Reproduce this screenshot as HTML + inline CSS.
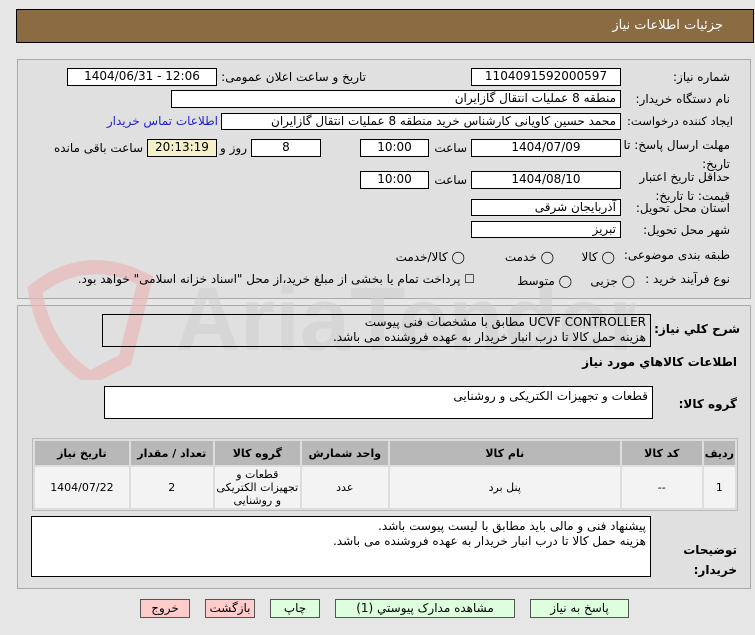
<!DOCTYPE html>
<html><head><meta charset="utf-8"><style>
*{box-sizing:border-box}
body{margin:0;width:755px;height:635px;background:#e6e6e6;font-family:"DejaVu Sans","Liberation Sans",sans-serif;font-size:12px;color:#000;position:relative;overflow:hidden}
.a{position:absolute}
.box{position:absolute;background:#fff;border:1px solid #000;direction:rtl;padding:0 4px;line-height:15px;white-space:nowrap;overflow:hidden}
.c{text-align:center;direction:ltr}
.l{position:absolute;direction:rtl;white-space:nowrap;text-align:right}
.btn{position:absolute;top:599px;height:19px;border:1px solid #555;text-align:center;line-height:17px;font-size:12px}
table{border-collapse:separate;border-spacing:2px;position:absolute;left:32px;top:438px;width:706px;background:#ddd;border:1px solid #bbb;direction:rtl}
th{background:#b8b8b8;height:24px;font-size:11px;font-weight:bold}
td{background:#f3f3f3;text-align:center;font-size:11px;height:41px}
</style></head><body>
<div class="a" style="left:16px;top:9px;width:738px;height:34px;background:#8b6b42;border:1px solid #000"></div>
<div class="l" style="right:32px;top:18px;color:#fff;font-size:13px">جزئیات اطلاعات نیاز</div>
<div class="a" style="left:17px;top:59px;width:734px;height:240px;background:#e0e0e0;border:1px solid #aaa"></div>
<div class="a" style="left:17px;top:305px;width:734px;height:284px;background:#e0e0e0;border:1px solid #aaa"></div>
<svg class="a" style="left:15px;top:250px" width="620" height="130">
<path d="M20 40 Q70 0 130 30 L110 110 Q90 120 75 128 Q30 100 20 40Z" fill="none" stroke="#e8b8b8" stroke-width="14" opacity=".7"/>
<text x="160" y="100" font-family="Liberation Sans" font-size="90" font-weight="bold" fill="#cfcfcf" opacity=".55">AriaTender.net</text>
</svg>
<div class="l" style="right:25px;top:70px">شماره نیاز:</div>
<div class="box c" style="left:471px;top:68px;width:150px;height:18px">1104091592000597</div>
<div class="l" style="right:389px;top:70px">تاریخ و ساعت اعلان عمومی:</div>
<div class="box c" style="left:67px;top:68px;width:150px;height:18px">1404/06/31 - 12:06</div>
<div class="l" style="right:25px;top:92px">نام دستگاه خریدار:</div>
<div class="box" style="left:171px;top:90px;width:450px;height:18px">منطقه 8 عملیات انتقال گازایران</div>
<div class="l" style="right:22px;top:114px;font-size:11.5px">ایجاد کننده درخواست:</div>
<div class="box" style="left:221px;top:113px;width:400px;height:17px">محمد حسین کاویانی کارشناس خرید منطقه 8 عملیات انتقال گازایران</div>
<div class="l" style="right:537px;top:114px;color:#2222cc">اطلاعات تماس خریدار</div>
<div class="l" style="right:25px;top:136px;line-height:19px">مهلت ارسال پاسخ: تا<br>تاریخ:</div>
<div class="box c" style="left:471px;top:139px;width:150px;height:18px">1404/07/09</div>
<div class="l" style="right:288px;top:141px">ساعت</div>
<div class="box c" style="left:360px;top:139px;width:69px;height:18px">10:00</div>
<div class="box c" style="left:251px;top:139px;width:70px;height:18px">8</div>
<div class="l" style="right:508px;top:141px">روز و</div>
<div class="box c" style="left:147px;top:139px;width:70px;height:18px;background:#f4f0c8">20:13:19</div>
<div class="l" style="right:612px;top:141px">ساعت باقی مانده</div>
<div class="l" style="right:25px;top:168px;line-height:19px">حداقل تاریخ اعتبار<br>قیمت: تا تاریخ:</div>
<div class="box c" style="left:471px;top:171px;width:150px;height:18px">1404/08/10</div>
<div class="l" style="right:288px;top:173px">ساعت</div>
<div class="box c" style="left:360px;top:171px;width:69px;height:18px">10:00</div>
<div class="l" style="right:25px;top:201px">استان محل تحویل:</div>
<div class="box" style="left:471px;top:199px;width:150px;height:17px">آذربایجان شرقی</div>
<div class="l" style="right:25px;top:223px">شهر محل تحویل:</div>
<div class="box" style="left:471px;top:221px;width:150px;height:17px">تبریز</div>
<div class="l" style="right:25px;top:248px">طبقه بندی موضوعی:</div>
<div class="l" style="right:140px;top:250px">◯ کالا</div>
<div class="l" style="right:201px;top:250px">◯ خدمت</div>
<div class="l" style="right:290px;top:250px">◯ کالا/خدمت</div>
<div class="l" style="right:25px;top:272px">نوع فرآیند خرید :</div>
<div class="l" style="right:120px;top:274px">◯ جزیی</div>
<div class="l" style="right:183px;top:274px">◯ متوسط</div>
<div class="l" style="right:280px;top:272px">☐ پرداخت تمام یا بخشی از مبلغ خرید،از محل "اسناد خزانه اسلامی" خواهد بود.</div>
<div class="l" style="right:15px;top:322px;font-weight:bold">شرح کلي نياز:</div>
<div class="box" style="left:102px;top:314px;width:549px;height:33px;background:transparent;white-space:normal">UCVF CONTROLLER  مطابق با مشخصات فنی پیوست<br>هزینه حمل کالا تا درب انبار خریدار به عهده فروشنده می باشد.</div>
<div class="l" style="right:18px;top:355px;font-weight:bold">اطلاعات کالاهاي مورد نياز</div>
<div class="l" style="right:18px;top:397px;font-weight:bold">گروه کالا:</div>
<div class="box" style="left:104px;top:386px;width:549px;height:33px;padding-top:2px">قطعات و تجهیزات الکتریکی و روشنایی</div>
<table><tr><th style="width:26px">ردیف</th><th style="width:80px">کد کالا</th><th style="width:230px">نام کالا</th><th style="width:86px">واحد شمارش</th><th style="width:85px">گروه کالا</th><th style="width:82px">تعداد / مقدار</th><th>تاریخ نیاز</th></tr>
<tr><td>1</td><td>--</td><td>پنل برد</td><td>عدد</td><td style="line-height:13px">قطعات و تجهیزات الکتریکی و روشنایی</td><td>2</td><td>1404/07/22</td></tr></table>
<div class="l" style="right:18px;top:540px;font-weight:bold;line-height:20px">توضیحات<br>خریدار:</div>
<div class="box" style="left:31px;top:516px;width:620px;height:61px;white-space:normal;padding-top:2px">پیشنهاد فنی و مالی باید مطابق با لیست پیوست باشد.<br>هزینه حمل کالا تا درب انبار خریدار به عهده فروشنده می باشد.</div>
<div class="btn" style="left:140px;width:50px;background:#fcc">خروج</div>
<div class="btn" style="left:205px;width:50px;background:#fcc">بازگشت</div>
<div class="btn" style="left:270px;width:50px;background:#dfd">چاپ</div>
<div class="btn" style="left:335px;width:180px;background:#dfd">مشاهده مدارک پیوستي (1)</div>
<div class="btn" style="left:530px;width:99px;background:#dfd">پاسخ به نیاز</div>
</body></html>
